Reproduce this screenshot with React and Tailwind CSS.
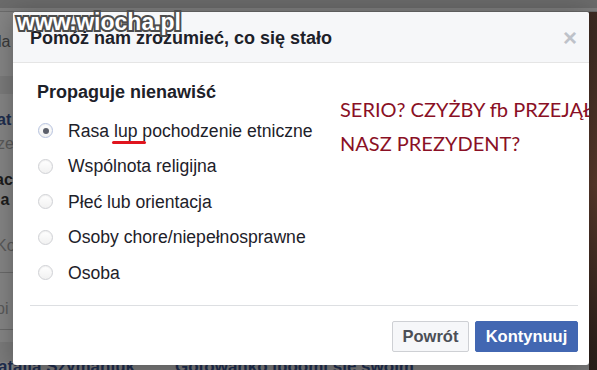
import React from "react";

function Radio({ checked }) {
  return (
    <span className={`relative inline-flex h-[15px] w-[15px] shrink-0 items-center justify-center rounded-full border ${checked ? "border-[#b7c3df]" : "border-[#d0d1d5]"} bg-gradient-to-b from-[#ffffff] to-[#f1f1f1] shadow-[inset_0_1px_1px_rgba(0,0,0,0.06)]`}>
      {checked && <span className="h-[6px] w-[6px] rounded-full bg-[#5b5f6a]" />}
    </span>
  );
}

export default function App() {
  const options = [
    "Rasa lup pochodzenie etniczne",
    "Wspólnota religijna",
    "Płeć lub orientacja",
    "Osoby chore/niepełnosprawne",
    "Osoba",
  ];
  return (
    <div className="relative h-[370px] w-[597px] overflow-hidden bg-[#7a7a7a] font-['Liberation_Sans',Arial,sans-serif]">
      {/* background page (dimmed) */}
      <div className="flex h-full">
        <div className="flex w-[13px] flex-col overflow-hidden bg-[#858585] text-[16px] leading-none">
          <div className="h-[12px] bg-[#6c6c6c]" />
          <div className="mt-[22px] text-[#3a3a3a] -ml-[2px]">la</div>
          <div className="mt-[26px] h-[18px] bg-[#7b7b7b]" />
          <div className="mt-[18px] font-bold text-[#1e2d4e] -ml-[3px]">at</div>
          <div className="mt-[8px] text-[#5a5a5a] -ml-[3px]">ze</div>
          <div className="mt-[20px] font-bold text-[#1c1c1c] -ml-[5px]">ac</div>
          <div className="mt-[4px] font-bold text-[#1c1c1c] -ml-[4px]">ja</div>
          <div className="mt-[30px] text-[#5a5a5a] -ml-[4px]">Ko</div>
          <div className="mt-[18px] h-px bg-[#6a6a6a]" />
          <div className="mt-[28px] text-[#5a5a5a] -ml-[4px]">pi</div>
          <div className="mt-[12px] h-px bg-[#6a6a6a]" />
          <div className="mt-[12px] h-[20px] bg-[#7b7b7b]" />
        </div>
        <div className="flex-1" />
        <div className="w-[8px] bg-gradient-to-b from-[#3b2a22] via-[#5a3a2c] to-[#2a1f1a]" />
      </div>
      <div className="absolute bottom-[-9px] left-0 flex gap-[40px] whitespace-nowrap text-[17px] font-bold text-[#1e2d4e]">
        <span className="-ml-[2px]">atalia Szymaniuk</span>
        <span>Gotowanko iboomi się swoim</span>
      </div>
      <div className="absolute left-0 top-0 h-[12px] w-full bg-[#6b6b6b]">
        <div className="mt-[8px] h-[3px] bg-[#7f7f7f]" />
      </div>

      {/* dialog */}
      <div className="absolute left-[13px] top-[12px] flex h-[353px] w-[576px] flex-col overflow-hidden rounded-[3px] bg-white shadow-[0_2px_26px_rgba(0,0,0,0.3)]">
        <div className="flex h-[51px] items-center justify-between border-b border-[#e5e5e5] bg-[#f6f7f9] pl-[17px] pr-[12px]">
          <span className="pt-[2px] text-[18px] font-bold text-[#1d2129]">Pomóż nam zrozumieć, co się stało</span>
          <span className="pt-[2px] text-[24px] font-bold leading-none text-[#bec2c9]">×</span>
        </div>
        <div className="relative flex flex-1 flex-col pl-[17px] pr-[11px]">
          <div className="pl-[7px] pt-[17px] text-[18px] font-bold leading-[24px] text-[#1d2129]">Propaguje nienawiść</div>
          <div className="mt-[9px] flex flex-col">
            {options.map((o, i) => (
              <div key={o} className="flex h-[35.5px] items-center gap-[15px] pl-[8px] text-[17.6px] text-[#1d2129]">
                <Radio checked={i === 0} />
                {i === 0 ? (
                  <span>
                    Rasa <span className="relative">lup<span className="absolute left-[-2px] right-[-9px] top-[20px] h-[3px] rounded-full bg-[#e0141e]" /></span> pochodzenie etniczne
                  </span>
                ) : (
                  <span>{o}</span>
                )}
              </div>
            ))}
          </div>
          <div className="mt-[14px] h-px bg-[#dddfe2]" />
          <div className="mt-[15px] flex justify-end gap-[6px]">
            <button className="h-[31px] w-[77px] rounded-[2px] border border-[#ced0d4] bg-[#f6f7f9] text-[16.5px] font-bold text-[#4b4f56]">Powrót</button>
            <button className="h-[31px] w-[103px] rounded-[2px] border border-[#4267b2] bg-[#4267b2] text-[16.5px] font-bold text-white">Kontynuuj</button>
          </div>
          <div className="absolute left-[327px] top-[29px] whitespace-nowrap font-['Lato',sans-serif] text-[20px] leading-[34px] text-[#8a1025]">
            <div>SERIO? CZYŻBY fb PRZEJĄŁ</div>
            <div>NASZ PREZYDENT?</div>
          </div>
        </div>
      </div>

      {/* watermark */}
      <div className="absolute left-[17px] top-[11px] font-['Liberation_Sans',sans-serif] text-[23px] font-bold leading-none text-white [paint-order:stroke_fill] [-webkit-text-stroke:4px_#4d4d4d]">
        www.wiocha.pl
      </div>
    </div>
  );
}
